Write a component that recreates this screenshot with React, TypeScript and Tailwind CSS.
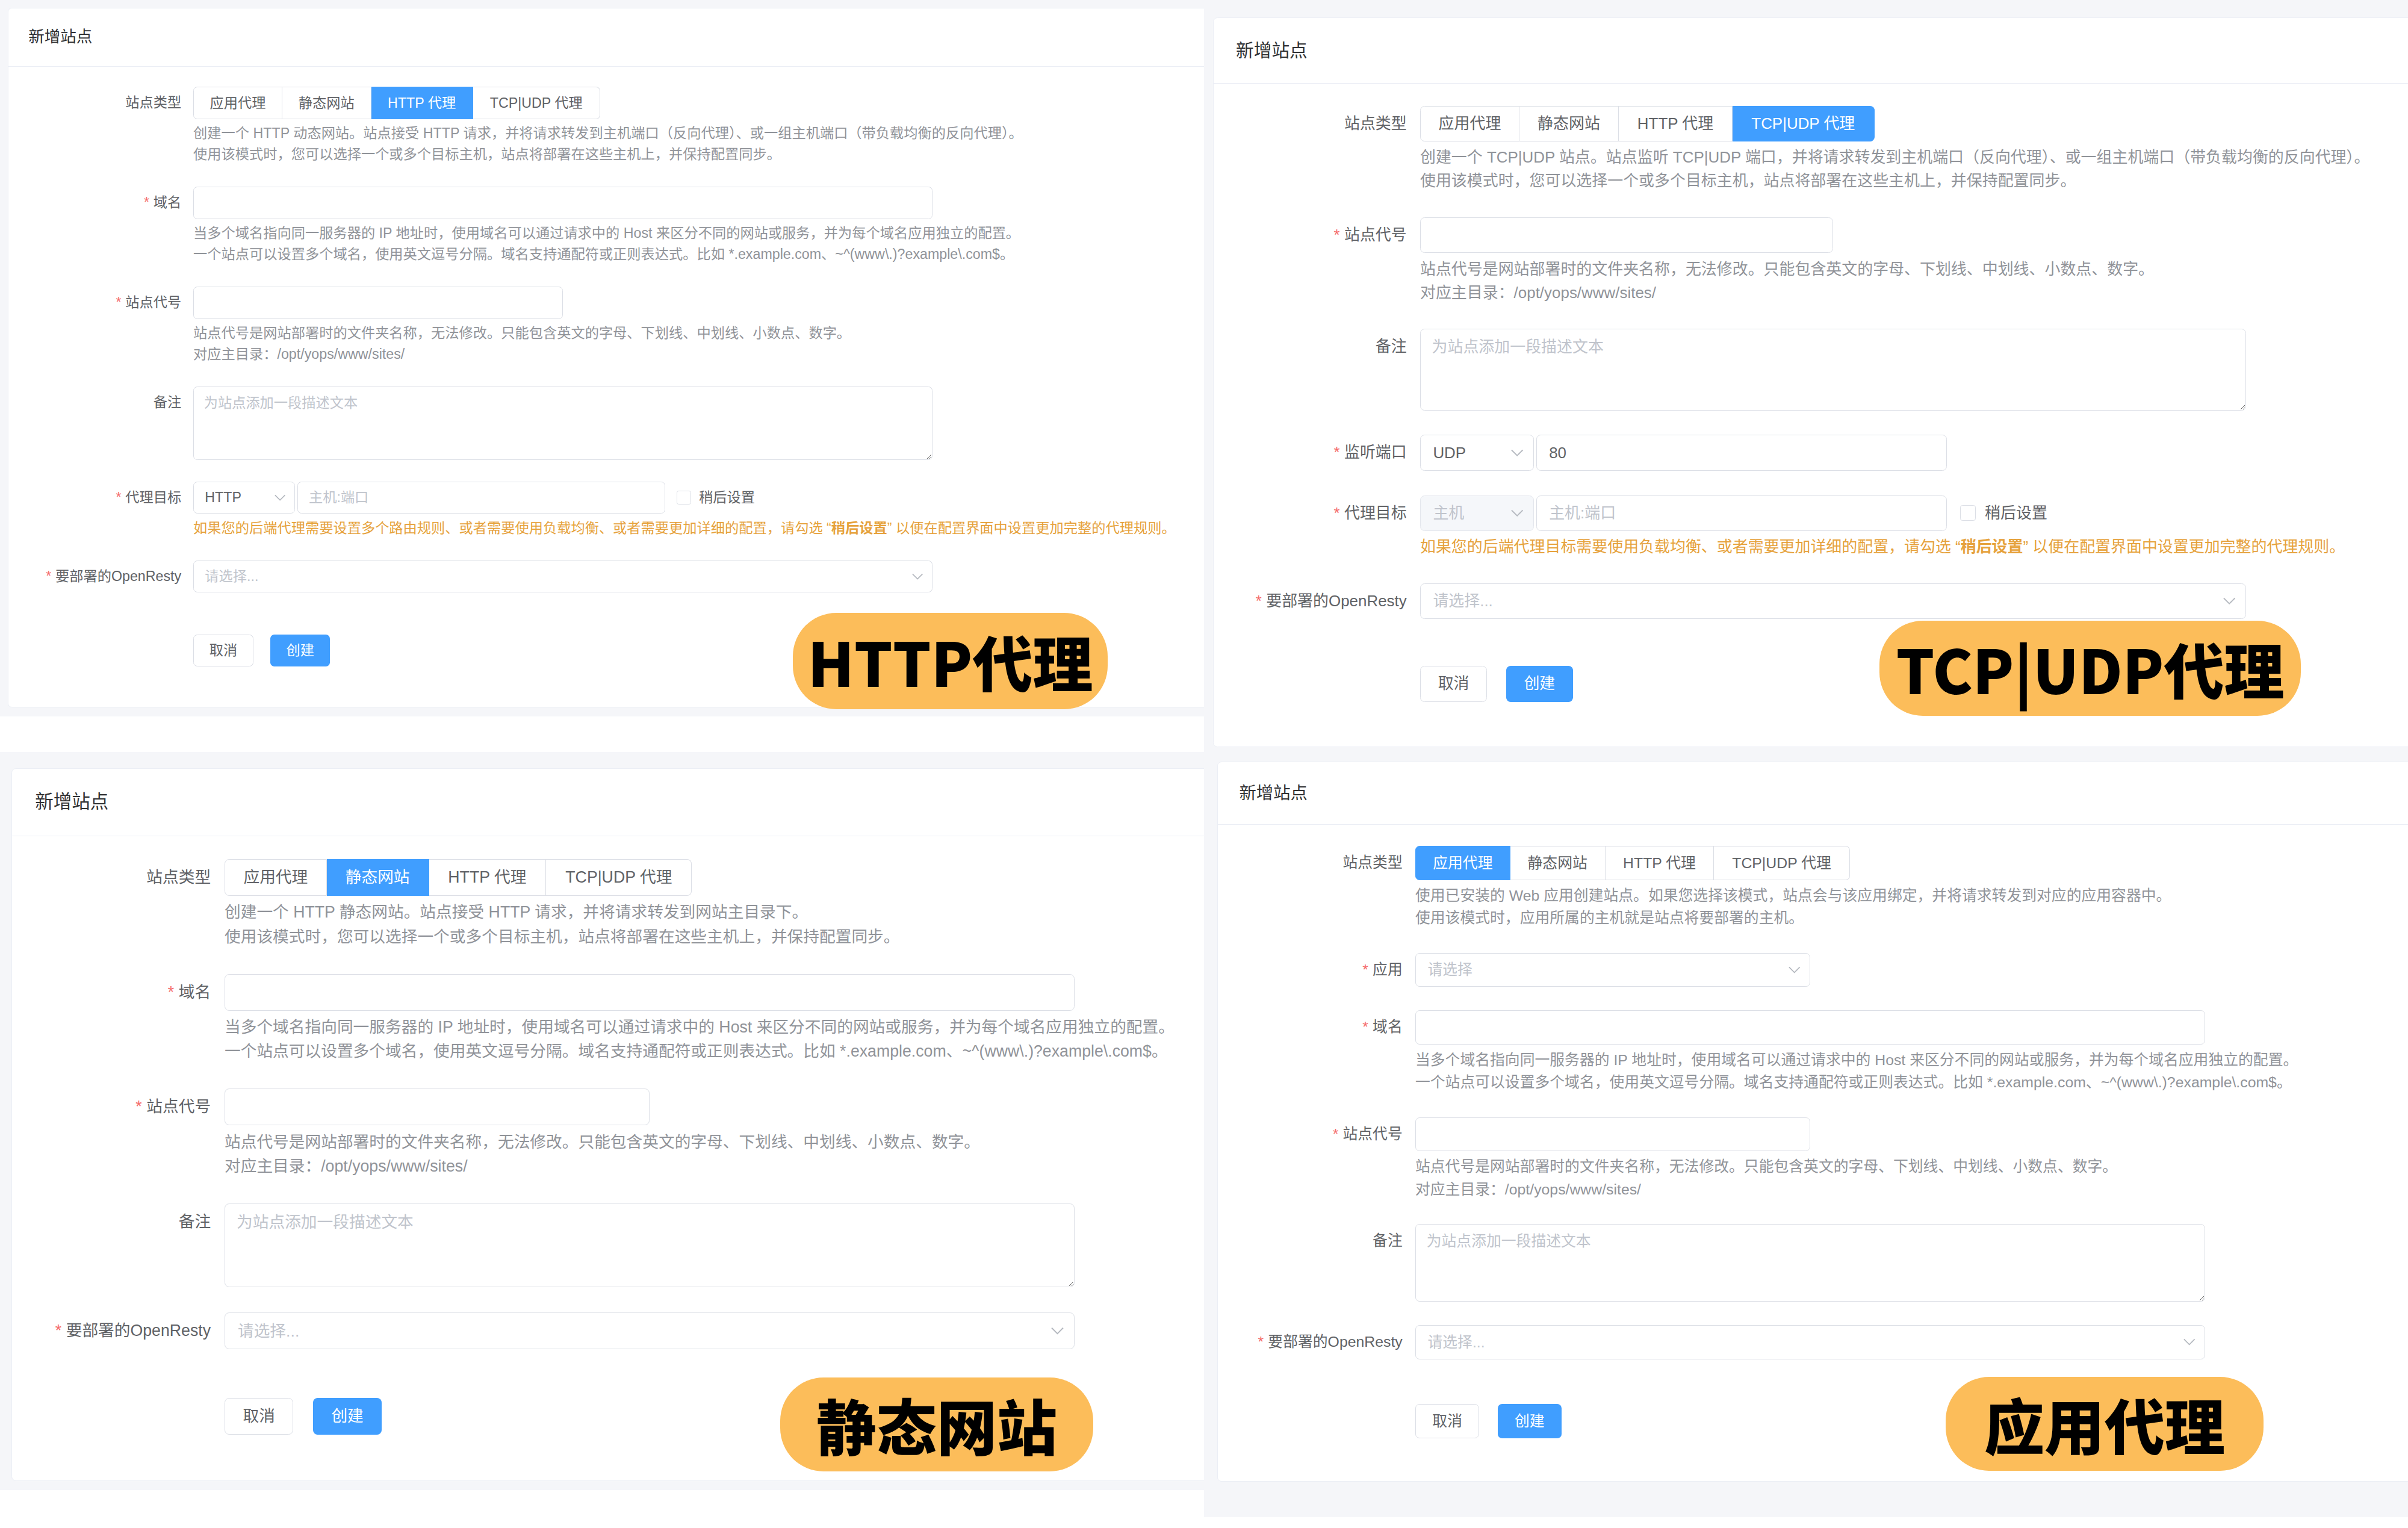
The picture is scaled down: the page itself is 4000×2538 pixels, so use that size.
import React from 'react';

type Kind = 'app' | 'static' | 'http' | 'tcp';

const labelCls = 'w-[165px] shrink-0 pr-3 text-right text-[14px] leading-[32px] text-[#606266]';

function Chevron() {
  return (
    <svg width="11" height="7" viewBox="0 0 11 7" className="shrink-0">
      <polyline points="0.5,0.8 5.5,5.8 10.5,0.8" fill="none" stroke="#b4b8bf" strokeWidth="1" />
    </svg>
  );
}

function FormItem({ label, required, children }: { label: string; required?: boolean; children: React.ReactNode }) {
  return (
    <div className="mb-[22px] flex">
      <div className={labelCls}>
        {required && <span className="mr-1 text-[#f56c6c]">*</span>}
        {label}
      </div>
      <div className="min-w-0 flex-1">{children}</div>
    </div>
  );
}

function Help({ children }: { children: React.ReactNode }) {
  return <div className="mt-1 whitespace-nowrap text-[14px] leading-[21px] text-[#909399]">{children}</div>;
}

function TypeTabs({ active }: { active: Kind }) {
  const tabs: [Kind, string, string][] = [
    ['app', '应用代理', 'w-[89px] rounded-l-[4px] border-l'],
    ['static', '静态网站', 'w-[89px]'],
    ['http', 'HTTP 代理', 'w-[102px]'],
    ['tcp', 'TCP|UDP 代理', 'w-[127px] rounded-r-[4px]'],
  ];
  return (
    <div className="flex">
      {tabs.map(([k, text, cls]) => (
        <div
          key={k}
          className={`flex h-[32px] items-center justify-center whitespace-nowrap border-y border-r text-[14px] ${cls} ${
            k === active ? 'border-[#409eff] bg-[#409eff] text-white' : 'border-[#dcdfe6] bg-white text-[#606266]'
          }`}
        >
          {text}
        </div>
      ))}
    </div>
  );
}

function TextBox({ width, placeholder, value }: { width: string; placeholder?: string; value?: string }) {
  return (
    <div className={`flex h-[32px] items-center rounded-[4px] border border-[#dcdfe6] bg-white px-[11px] text-[14px] ${width}`}>
      {value ? <span className="text-[#606266]">{value}</span> : <span className="text-[#c0c4cc]">{placeholder}</span>}
    </div>
  );
}

function SelectBox({
  width,
  placeholder,
  value,
  disabled,
}: {
  width: string;
  placeholder?: string;
  value?: string;
  disabled?: boolean;
}) {
  return (
    <div
      className={`flex h-[32px] items-center justify-between rounded-[4px] border pl-[11px] pr-[9px] text-[14px] ${width} ${
        disabled ? 'border-[#e4e7ed] bg-[#f5f7fa]' : 'border-[#dcdfe6] bg-white'
      }`}
    >
      {value ? (
        <span className={disabled ? 'text-[#c0c4cc]' : 'text-[#606266]'}>{value}</span>
      ) : (
        <span className="text-[#c0c4cc]">{placeholder}</span>
      )}
      <Chevron />
    </div>
  );
}

function Remark() {
  return (
    <FormItem label="备注">
      <textarea
        readOnly
        placeholder="为站点添加一段描述文本"
        className="block h-[73px] w-[740px] resize-y rounded-[4px] border border-[#dcdfe6] bg-white px-[10px] py-[5px] text-[14px] leading-[21px] text-[#606266] outline-none placeholder:text-[#c0c4cc]"
      />
    </FormItem>
  );
}

function DomainItem() {
  return (
    <FormItem label="域名" required>
      <TextBox width="w-[740px]" />
      <Help>
        <div>当多个域名指向同一服务器的 IP 地址时，使用域名可以通过请求中的 Host 来区分不同的网站或服务，并为每个域名应用独立的配置。</div>
        <div>一个站点可以设置多个域名，使用英文逗号分隔。域名支持通配符或正则表达式。比如 *.example.com、~^(www\.)?example\.com$。</div>
      </Help>
    </FormItem>
  );
}

function CodeItem() {
  return (
    <FormItem label="站点代号" required>
      <TextBox width="w-[370px]" />
      <Help>
        <div>站点代号是网站部署时的文件夹名称，无法修改。只能包含英文的字母、下划线、中划线、小数点、数字。</div>
        <div>对应主目录：/opt/yops/www/sites/</div>
      </Help>
    </FormItem>
  );
}

function LaterCheck() {
  return (
    <div className="ml-[12px] flex items-center">
      <div className="h-[14px] w-[14px] rounded-[2px] border border-[#dcdfe6] bg-white" />
      <span className="ml-[8px] text-[14px] text-[#606266]">稍后设置</span>
    </div>
  );
}

function OrangeHelp({ children }: { children: React.ReactNode }) {
  return <div className="mt-1 whitespace-nowrap text-[14px] leading-[21px] text-[#e6a23c]">{children}</div>;
}

function OpenRestyItem() {
  return (
    <FormItem label="要部署的OpenResty" required>
      <SelectBox width="w-[740px]" placeholder="请选择..." />
    </FormItem>
  );
}

function Buttons() {
  return (
    <div className="flex pl-[165px] pt-[20px]">
      <div className="flex h-[32px] w-[60px] items-center justify-center rounded-[4px] border border-[#dcdfe6] bg-white text-[14px] text-[#606266]">
        取消
      </div>
      <div className="ml-[17px] flex h-[32px] w-[60px] items-center justify-center rounded-[4px] bg-[#409eff] text-[14px] text-white">
        创建
      </div>
    </div>
  );
}

const descs: Record<Kind, string[]> = {
  app: ['使用已安装的 Web 应用创建站点。如果您选择该模式，站点会与该应用绑定，并将请求转发到对应的应用容器中。', '使用该模式时，应用所属的主机就是站点将要部署的主机。'],
  static: ['创建一个 HTTP 静态网站。站点接受 HTTP 请求，并将请求转发到网站主目录下。', '使用该模式时，您可以选择一个或多个目标主机，站点将部署在这些主机上，并保持配置同步。'],
  http: [
    '创建一个 HTTP 动态网站。站点接受 HTTP 请求，并将请求转发到主机端口（反向代理）、或一组主机端口（带负载均衡的反向代理）。',
    '使用该模式时，您可以选择一个或多个目标主机，站点将部署在这些主机上，并保持配置同步。',
  ],
  tcp: [
    '创建一个 TCP|UDP 站点。站点监听 TCP|UDP 端口，并将请求转发到主机端口（反向代理）、或一组主机端口（带负载均衡的反向代理）。',
    '使用该模式时，您可以选择一个或多个目标主机，站点将部署在这些主机上，并保持配置同步。',
  ],
};

function SiteForm({ kind }: { kind: Kind }) {
  return (
    <div className="w-[1300px] rounded-[4px] border border-[#ebeef5] bg-white font-['Liberation_Sans','Noto_Sans_CJK_SC',sans-serif]">
      <div className="border-b border-[#ebeef5] px-5 py-[17px] text-[16px] leading-[24px] text-[#303133]">新增站点</div>
      <div className="px-5 pb-[40px] pt-5">
        <FormItem label="站点类型">
          <TypeTabs active={kind} />
          <Help>
            {descs[kind].map((d) => (
              <div key={d}>{d}</div>
            ))}
          </Help>
        </FormItem>

        {kind === 'app' && (
          <FormItem label="应用" required>
            <SelectBox width="w-[370px]" placeholder="请选择" />
          </FormItem>
        )}
        {kind !== 'tcp' && <DomainItem />}
        <CodeItem />
        <Remark />

        {kind === 'http' && (
          <FormItem label="代理目标" required>
            <div className="flex items-center">
              <SelectBox width="w-[102px]" value="HTTP" />
              <div className="ml-[2px]">
                <TextBox width="w-[368px]" placeholder="主机:端口" />
              </div>
              <LaterCheck />
            </div>
            <OrangeHelp>
              如果您的后端代理需要设置多个路由规则、或者需要使用负载均衡、或者需要更加详细的配置，请勾选 “<b>稍后设置</b>” 以便在配置界面中设置更加完整的代理规则。
            </OrangeHelp>
          </FormItem>
        )}

        {kind === 'tcp' && (
          <>
            <FormItem label="监听端口" required>
              <div className="flex items-center">
                <SelectBox width="w-[102px]" value="UDP" />
                <div className="ml-[2px]">
                  <TextBox width="w-[368px]" value="80" />
                </div>
              </div>
            </FormItem>
            <FormItem label="代理目标" required>
              <div className="flex items-center">
                <SelectBox width="w-[102px]" value="主机" disabled />
                <div className="ml-[2px]">
                  <TextBox width="w-[368px]" placeholder="主机:端口" />
                </div>
                <LaterCheck />
              </div>
              <OrangeHelp>
                如果您的后端代理目标需要使用负载均衡、或者需要更加详细的配置，请勾选 “<b>稍后设置</b>” 以便在配置界面中设置更加完整的代理规则。
              </OrangeHelp>
            </FormItem>
          </>
        )}

        <OpenRestyItem />
        <Buttons />
      </div>
    </div>
  );
}

function Badge({ text, className }: { text: string; className: string }) {
  return (
    <div
      className={`absolute flex items-center justify-center rounded-[72px] bg-[#fcbd5a] font-['Noto_Sans_CJK_SC',sans-serif] text-[100px] font-black leading-none text-black ${className}`}
    >
      {text}
    </div>
  );
}

export default function App() {
  return (
    <div className="flex h-[2538px] w-[4000px] overflow-hidden bg-white">
      {/* left column */}
      <div className="flex w-[2000px] shrink-0 flex-col">
        <div className="relative h-[1190px] overflow-hidden bg-[#f5f6f9] pl-[13px] pt-[13px]">
          <div className="[zoom:1.66]">
            <SiteForm kind="http" />
          </div>
          <Badge text="HTTP代理" className="left-[1317px] top-[1018px] h-[160px] w-[523px]" />
        </div>
        <div className="h-[59px] bg-white" />
        <div className="relative h-[1226px] overflow-hidden bg-[#f5f6f9] pl-[19px] pt-[27px]">
          <div className="[zoom:1.908]">
            <SiteForm kind="static" />
          </div>
          <Badge text="静态网站" className="left-[1296px] top-[1039px] h-[156px] w-[520px]" />
        </div>
      </div>

      {/* right column */}
      <div className="flex w-[2000px] shrink-0 flex-col">
        <div className="relative h-[1250px] overflow-hidden bg-[#f5f6f9] pl-[15px] pt-[29px]">
          <div className="[zoom:1.854]">
            <SiteForm kind="tcp" />
          </div>
          <Badge text="TCP|UDP代理" className="left-[1122px] top-[1031px] h-[158px] w-[700px]" />
        </div>
        <div className="relative h-[1270px] overflow-hidden bg-[#f5f6f9] pl-[22px] pt-[15px]">
          <div className="[zoom:1.773]">
            <SiteForm kind="app" />
          </div>
          <Badge text="应用代理" className="left-[1232px] top-[1037px] h-[156px] w-[528px]" />
        </div>
      </div>
    </div>
  );
}
